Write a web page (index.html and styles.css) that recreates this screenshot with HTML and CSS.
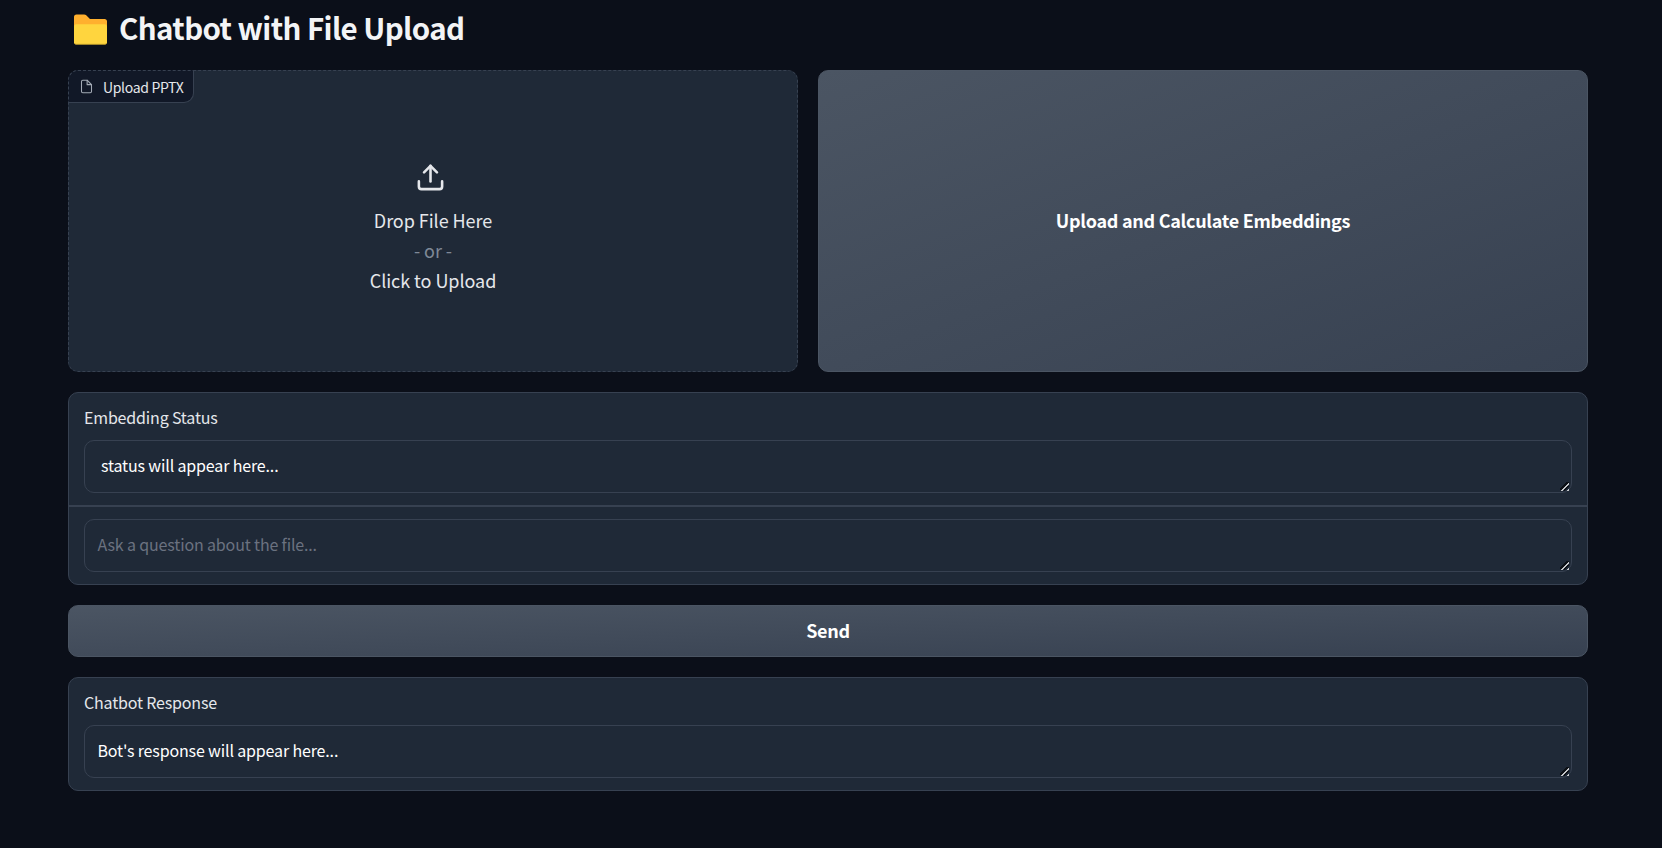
FILE: index.html
```html
<!DOCTYPE html>
<html lang="en">
<head>
<meta charset="utf-8">
<title>Chatbot with File Upload</title>
<link rel="stylesheet" href="styles.css">
</head>
<body>
<main class="app">
  <h1 class="title">
    <svg class="folder" viewBox="0 0 33 31" width="33" height="31"><path d="M0 3Q0 .5 2.500.500H10Q11.500 .5 12.500 1.500L16 5H30.500Q33 5 33 7.500V18H0Z" fill="#ffb02e"/><path d="M0 12.500Q0 10.300 2.200 10.300H30.800Q33 10.300 33 12.500V28.500Q33 30.500 31 30.500H2Q0 30.500 0 28.500Z" fill="#ffd53e"/><path d="M.5 29.300Q1 30.300 2 30.300H31Q32 30.300 32.500 29.300" fill="none" stroke="#b99627" stroke-width=".7"/></svg>
    <span class="title-text">Chatbot with File Upload</span>
  </h1>
  <section class="row">
    <div class="drop">
      <div class="tag">
        <svg class="file-icon" viewBox="0 0 24 24" width="15" height="15" fill="none" stroke="currentColor" stroke-width="1.700" stroke-linecap="round" stroke-linejoin="round"><path d="M13 2H6a2 2 0 0 0-2 2v16a2 2 0 0 0 2 2h12a2 2 0 0 0 2-2V9z"/><path d="M13 2v7h7"/></svg>
        <span class="tag-text">Upload PPTX</span>
      </div>
      <svg class="upload-icon" viewBox="0 0 24 24" width="31" height="31" fill="none" stroke="currentColor" stroke-width="2" stroke-linecap="round" stroke-linejoin="round"><path d="M21 15v4a2 2 0 0 1-2 2H5a2 2 0 0 1-2-2v-4"/><path d="M17 8l-5-5-5 5"/><path d="M12 3v12"/></svg>
      <div class="drop-line drop-file">Drop File Here</div>
      <div class="drop-line or">- or -</div>
      <div class="drop-line click">Click to Upload</div>
    </div>
    <button class="button embed"><span class="embed-text">Upload and Calculate Embeddings</span></button>
  </section>
  <section class="form">
    <div class="block">
      <div class="label status-label">Embedding Status</div>
      <div class="field indented"><span class="status-text">status will appear here...</span><svg class="grip" viewBox="0 0 9 9" width="9" height="9" shape-rendering="crispEdges"><use href="#grip"/></svg></div>
    </div>
    <div class="block question">
      <div class="field placeholder"><span class="question-text">Ask a question about the file...</span><svg class="grip" viewBox="0 0 9 9" width="9" height="9" shape-rendering="crispEdges"><use href="#grip"/></svg></div>
    </div>
  </section>
  <button class="button send"><span class="send-text">Send</span></button>
  <section class="form">
    <div class="block">
      <div class="label response-label">Chatbot Response</div>
      <div class="field"><span class="response-text">Bot's response will appear here...</span><svg class="grip" viewBox="0 0 9 9" width="9" height="9" shape-rendering="crispEdges"><use href="#grip"/></svg></div>
    </div>
  </section>
</main>
<svg class="defs" width="0" height="0"><defs><g id="grip"><path d="M0 8L8 0M4 8.500L8.500 4" stroke="#0c1016" stroke-width="1.700"/><path d="M1.500 9L9 1.500M7 9.500L9.500 7" stroke="#c4c6c9" stroke-width="2"/></g></defs></svg>
</body>
</html>
```

FILE: styles.css
```css
* { box-sizing: border-box; }
body {
  margin: 0;
  background: #0b0f19;
  color: #f3f4f6;
  font-family: "Noto Sans CJK SC", "Noto Sans", sans-serif;
  font-size: 16px;
  overflow: hidden;
}
.defs { position: absolute; }
.app {
  width: 1520px;
  height: 848px;
  margin-left: 68px;
  display: flex;
  flex-direction: column;
  gap: 20px;
}
.title {
  margin: 0;
  height: 50px;
  padding: 0 0 0 6px;
  display: flex;
  align-items: center;
  gap: 12px;
  font-size: 29.5px;
  font-weight: 600;
  line-height: 50px;
  letter-spacing: -0.6px;
  white-space: nowrap;
}
.folder { margin-top: 8px; }
.title-text { padding-top: 4px; }
.row { display: flex; gap: 20px; height: 302px; }
.drop {
  position: relative;
  width: 730px;
  border: 1px dashed #374151;
  border-radius: 10px;
  background: #1f2937;
  display: flex;
  flex-direction: column;
  align-items: center;
  padding-top: 91px;
}
.tag {
  position: absolute;
  left: -1px;
  top: -1px;
  width: 126px;
  height: 33px;
  border: 1px solid #374151;
  border-top-style: dashed;
  border-left-style: dashed;
  border-radius: 10px 0 10px 0;
  background: #111827;
  display: flex;
  align-items: center;
  padding-left: 10px;
  gap: 9px;
  font-size: 14px;
  letter-spacing: -0.33px;
  white-space: nowrap;
  color: #e5e7eb;
}
.file-icon { color: #a3aab5; }
.upload-icon { color: #e5e7eb; margin-left: -5px; margin-bottom: 12px; }
.drop-line { font-size: 18px; line-height: 30px; color: #e5e7eb; letter-spacing: -0.05px; }
.drop-line.or { color: #7f8997; }
.button {
  font: inherit;
  font-weight: 700;
  font-size: 18px;
  letter-spacing: -0.28px;
  padding: 0 0 2px;
  color: #fff;
  border: 1px solid #4b5563;
  border-radius: 10px;
  background: linear-gradient(to bottom right, #4b5563, #374151);
}
.embed { width: 770px; }
.send { height: 52px; flex: none; }
.form {
  border: 1px solid #374151;
  border-radius: 10px;
  background: #1f2937;
}
.block { padding: 12px 15px; }
.question { border-top: 2px solid #374151; }
.label { height: 24px; margin-bottom: 11px; line-height: 24px; color: #e5e7eb; letter-spacing: -0.17px; }
.field {
  position: relative;
  height: 53px;
  border: 1px solid #374151;
  border-radius: 10px;
  padding-left: 12.5px;
  line-height: 49px;
  letter-spacing: -0.15px;
  color: #fff;
}
.indented { padding-left: 16px; }
.placeholder { color: #6b7280; }
.grip { position: absolute; right: 2px; bottom: 1px; }
```
